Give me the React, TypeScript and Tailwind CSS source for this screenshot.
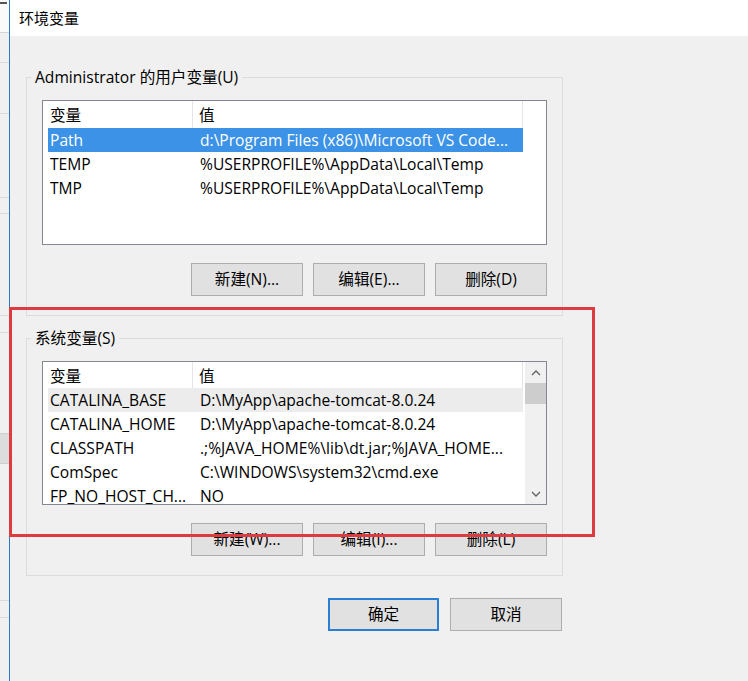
import React from "react"

type Row = { name: string; value: string; state?: "selected" | "hover" }

const userRows: Row[] = [
  { name: "Path", value: "d:\\Program Files (x86)\\Microsoft VS Code...", state: "selected" },
  { name: "TEMP", value: "%USERPROFILE%\\AppData\\Local\\Temp" },
  { name: "TMP", value: "%USERPROFILE%\\AppData\\Local\\Temp" },
]

const systemRows: Row[] = [
  { name: "CATALINA_BASE", value: "D:\\MyApp\\apache-tomcat-8.0.24", state: "hover" },
  { name: "CATALINA_HOME", value: "D:\\MyApp\\apache-tomcat-8.0.24" },
  { name: "CLASSPATH", value: ".;%JAVA_HOME%\\lib\\dt.jar;%JAVA_HOME..." },
  { name: "ComSpec", value: "C:\\WINDOWS\\system32\\cmd.exe" },
  { name: "FP_NO_HOST_CH...", value: "NO" },
]

const Chevron = ({ up }: { up?: boolean }) => (
  <svg width="10" height="6" viewBox="0 0 10 6">
    <polyline
      points={up ? "1,5 5,1 9,5" : "1,1 5,5 9,1"}
      fill="none"
      stroke="#606060"
      strokeWidth="1.3"
    />
  </svg>
)

const VarList = ({ rows, scroll }: { rows: Row[]; scroll?: boolean }) => (
  <div className={`flex overflow-hidden border border-[#828790] bg-white ${scroll ? "h-[144px]" : "h-[145px]"}`}>
    <div className="flex min-w-0 flex-1 flex-col">
      <div className={`flex w-[480px] shrink-0 ${scroll ? "h-[26px]" : "h-[27px]"}`}>
        <div className="flex w-[150px] items-center border-r border-[#e5e5e5] pt-[3px] pl-[7px]">变量</div>
        <div className="flex flex-1 items-center border-r border-[#e5e5e5] pt-[3px] pl-[6px]">值</div>
      </div>
      {rows.map((r) => (
        <div
          key={r.name}
          className={`ml-[5px] flex h-[24px] w-[475px] shrink-0 items-center whitespace-nowrap pt-[2px] ${
            r.state === "selected" ? "bg-[#3b92e6] text-white" : r.state === "hover" ? "bg-[#ececec]" : ""
          }`}
        >
          <div className="w-[145px] overflow-hidden pl-[2px]">{r.name}</div>
          <div className="flex-1 overflow-hidden pl-[7px]">{r.value}</div>
        </div>
      ))}
    </div>
    {scroll && (
      <div className="flex w-[21px] shrink-0 flex-col bg-[#f0f0f0]">
        <div className="flex h-[21px] items-center justify-center">
          <Chevron up />
        </div>
        <div className="h-[21px] bg-[#cdcdcd]" />
        <div className="flex-1" />
        <div className="flex h-[21px] items-center justify-center">
          <Chevron />
        </div>
      </div>
    )}
  </div>
)

const Btn = ({ label, primary, wide }: { label: string; primary?: boolean; wide?: boolean }) => (
  <button
    className={`flex h-[33px] items-center justify-center bg-[#e1e1e1] pt-[1px] ${wide ? "w-[112px]" : "w-[111px]"} ${
      primary ? "border-2 border-[#2a7fd4]" : "border border-[#adadad]"
    }`}
  >
    {label}
  </button>
)

const Group = ({
  title,
  rows,
  scroll,
  buttons,
  className,
}: {
  title: string
  rows: Row[]
  scroll?: boolean
  buttons: string[]
  className?: string
}) => (
  <fieldset className={`w-[537px] border border-[#dcdcdc] px-[15px] pt-[13px] pb-[19px] ${className ?? ""}`}>
    <legend className="-ml-[11px] px-[4px] leading-[20px]">{title}</legend>
    <VarList rows={rows} scroll={scroll} />
    <div className="mt-[18px] flex justify-end gap-[10px]">
      {buttons.map((b) => (
        <Btn key={b} label={b} wide />
      ))}
    </div>
  </fieldset>
)

export default function App() {
  return (
    <div className="relative flex h-[681px] w-[748px] overflow-hidden bg-[#f0f0f0] font-['Open_Sans','Noto_Sans_CJK_SC',sans-serif] text-[15.6px] text-black">
      {/* sliver of the window behind */}
      <div className="flex w-[9px] shrink-0 flex-col bg-[#f0f0f0]">
        <div className="h-[33px] border-b border-[#d4d4d4] bg-[#fafafa] pt-[2px]">
          <div className="h-[2px] w-[7px] bg-[#555]" />
        </div>
        <div className="h-[30px] border-b border-[#dadada]" />
        <div className="h-[51px] border-b border-[#dadada]" />
        <div className="h-[84px] border-b border-[#dadada]" />
        <div className="h-[16px] border-b border-[#dadada]" />
        <div className="h-[102px] border-b border-[#dadada]" />
        <div className="h-[17px] border-b border-[#dadada]" />
        <div className="h-[101px] border-b border-[#cfcfcf]" />
        <div className="h-[30px] border-b border-[#cfcfcf] bg-[#dcdcdc]" />
        <div className="h-[137px] border-b border-[#dadada]" />
        <div className="h-[17px] border-b border-[#dadada]" />
        <div className="flex-1" />
      </div>
      <div className="w-px shrink-0 bg-[#2b7bcc]" />

      <div className="flex min-w-0 flex-1 flex-col">
        <div className="flex h-[36px] shrink-0 items-center bg-white pl-[9px] text-[15px]">环境变量</div>
        <div className="flex flex-col pt-[31px] pl-[16px]">
          <Group
            title="Administrator 的用户变量(U)"
            rows={userRows}
            buttons={["新建(N)...", "编辑(E)...", "删除(D)"]}
          />
          <Group
            title="系统变量(S)"
            rows={systemRows}
            scroll
            buttons={["新建(W)...", "编辑(I)...", "删除(L)"]}
            className="mt-[12px]"
          />
          <div className="mt-[22px] flex w-[536px] justify-end gap-[11px]">
            <Btn label="确定" primary />
            <Btn label="取消" wide />
          </div>
        </div>
      </div>

      {/* red annotation box */}
      <div className="pointer-events-none absolute top-[307px] left-[9px] h-[230px] w-[586px] border-[3px] border-[#dc3b40]" />
    </div>
  )
}
